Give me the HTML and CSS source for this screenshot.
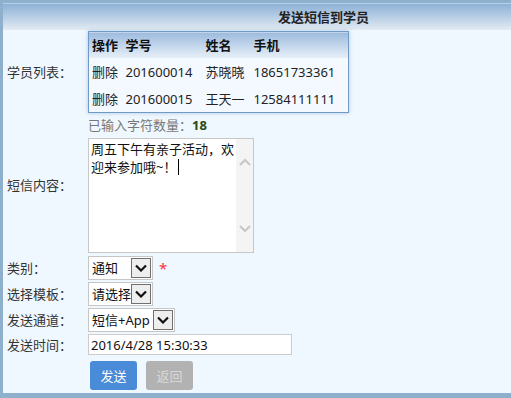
FILE: index.html
```html
<!DOCTYPE html>
<html lang="zh-CN">
<head>
    <meta charset="UTF-8">
    <meta name="viewport" content="width=device-width, initial-scale=1.0">
    <title>发送短信到学员</title>
    <link rel="stylesheet" href="styles.css">
</head>
<body>
    <div class="panel">
        <div class="panel-head">发送短信到学员</div>

        <div class="form">
            <!-- 学员列表 -->
            <div class="row row-list">
                <div class="label">学员列表：</div>
                <div class="field">
                    <table class="students">
                        <colgroup>
                            <col class="c1"><col class="c2"><col class="c3"><col class="c4">
                        </colgroup>
                        <thead>
                            <tr><th>操作</th><th>学号</th><th>姓名</th><th>手机</th></tr>
                        </thead>
                        <tbody>
                            <tr><td>删除</td><td>201600014</td><td>苏晓晓</td><td>18651733361</td></tr>
                            <tr><td>删除</td><td>201600015</td><td>王天一</td><td>12584111111</td></tr>
                        </tbody>
                    </table>
                </div>
            </div>

            <!-- 短信内容 -->
            <div class="row row-content">
                <div class="label">短信内容：</div>
                <div class="field field-stack">
                    <div class="count">已输入字符数量：<b>18</b></div>
                    <div class="textbox">
                        <div class="textbox-text">周五下午有亲子活动，欢迎来参加哦~！<span class="caret"></span></div>
                        <div class="scrollbar">
                            <svg width="12" height="8" viewBox="0 0 12 8"><path d="M1 7 L6 2 L11 7" fill="none" stroke="#c6c6c6" stroke-width="2"/></svg>
                            <svg width="12" height="8" viewBox="0 0 12 8"><path d="M1 1 L6 6 L11 1" fill="none" stroke="#c6c6c6" stroke-width="2"/></svg>
                        </div>
                    </div>
                </div>
            </div>

            <div class="row row-select">
                <div class="label">类别：</div>
                <div class="field">
                    <span class="select sel-type">
                        <span class="select-text">通知</span>
                        <span class="select-arrow"><svg width="12" height="8" viewBox="0 0 12 8"><path d="M1 1.5 L6 6.5 L11 1.5" fill="none" stroke="#111" stroke-width="2.2"/></svg></span>
                    </span>
                    <span class="required">*</span>
                </div>
            </div>

            <div class="row row-select">
                <div class="label">选择模板：</div>
                <div class="field">
                    <span class="select sel-tpl">
                        <span class="select-text">请选择</span>
                        <span class="select-arrow"><svg width="12" height="8" viewBox="0 0 12 8"><path d="M1 1.5 L6 6.5 L11 1.5" fill="none" stroke="#111" stroke-width="2.2"/></svg></span>
                    </span>
                </div>
            </div>

            <div class="row row-select">
                <div class="label">发送通道：</div>
                <div class="field">
                    <span class="select sel-channel">
                        <span class="select-text">短信+App</span>
                        <span class="select-arrow"><svg width="12" height="8" viewBox="0 0 12 8"><path d="M1 1.5 L6 6.5 L11 1.5" fill="none" stroke="#111" stroke-width="2.2"/></svg></span>
                    </span>
                </div>
            </div>

            <div class="row row-time">
                <div class="label">发送时间：</div>
                <div class="field">
                    <input class="time-input" type="text" value="2016/4/28 15:30:33">
                </div>
            </div>

            <div class="row row-buttons">
                <div class="label"></div>
                <div class="field buttons">
                    <button class="btn btn-send">发送</button>
                    <button class="btn btn-back">返回</button>
                </div>
            </div>
        </div>
    </div>
</body>
</html>
```

FILE: styles.css
```css
html, body {
    margin: 0;
    height: 398px;
    overflow: hidden;
}

body {
    background-color: #8fb0cd;
    font-family: "Noto Sans", "Noto Sans CJK SC", sans-serif;
    font-size: 13px;
    color: #333;
    text-spacing-trim: space-all;
}

.panel {
    margin: 3px 0 0 3px;
    height: 390px;
    background-color: #f0f8ff;
    border-top: 1px solid #b9d2ea;
    box-sizing: border-box;
}

.panel-head {
    height: 26px;
    line-height: 26px;
    padding-left: 275px;
    font-weight: bold;
    color: #222;
    background: linear-gradient(#8db1d6, #e3ebf3);
}

.form {
    padding-top: 1px;
}

.row {
    display: flex;
    align-items: center;
}

.label {
    width: 81px;
    padding-left: 4px;
    line-height: 18px;
    flex-shrink: 0;
}

.field {
    display: flex;
    align-items: center;
}

.field-stack {
    flex-direction: column;
    align-items: flex-start;
}

/* 学员列表 */
.students {
    border-collapse: collapse;
    table-layout: fixed;
    width: 260px;
    border: 1px solid #6d9ac6;
    box-shadow: 0 0 4px rgba(110, 150, 190, 0.5);
    background-color: #f3f9fe;
}

.students .c1 { width: 34px; }
.students .c2 { width: 80px; }
.students .c3 { width: 48px; }
.students .c4 { width: 98px; }

.students th,
.students td {
    padding: 0 0 0 3px;
    text-align: left;
    white-space: nowrap;
    line-height: 18px;
}

.students th {
    height: 26px;
    font-weight: bold;
    color: #111;
    background: linear-gradient(#9cbade, #e8f0f8);
}

.students td {
    height: 27px;
    color: #222;
}

/* 短信内容 */
.row-content {
    margin-top: 3px;
}

.count {
    height: 18px;
    line-height: 18px;
    margin-bottom: 4px;
    color: #777;
}

.count b {
    color: #2b4a12;
}

.textbox {
    display: flex;
    width: 166px;
    height: 115px;
    box-sizing: border-box;
    border: 1px solid #c8c8c8;
    background-color: #fff;
}

.textbox-text {
    flex: 1;
    padding: 1px 0 1px 2px;
    line-height: 18px;
    color: #111;
}

.caret {
    display: inline-block;
    width: 1px;
    height: 16px;
    margin-left: 2px;
    vertical-align: -3px;
    background-color: #000;
}

.scrollbar {
    width: 17px;
    background-color: #f4f4f4;
    display: flex;
    flex-direction: column;
    justify-content: space-between;
    align-items: center;
    padding: 19px 0 19px;
    box-sizing: border-box;
}

/* 下拉框 */
.row-select {
    margin-top: 2px;
}

.row-content + .row-select {
    margin-top: 3px;
}

.select {
    display: inline-flex;
    align-items: center;
    height: 24px;
    box-sizing: border-box;
    border: 1px solid #c6c6c6;
    background-color: #fff;
    padding: 0 1px 0 3px;
    color: #111;
}

.select-text {
    flex: 1;
    line-height: 18px;
    white-space: nowrap;
}

.select-arrow {
    width: 20px;
    height: 20px;
    box-sizing: border-box;
    border: 1px solid #707070;
    background-color: #eee;
    display: flex;
    align-items: center;
    justify-content: center;
}

.sel-type { width: 65px; }
.sel-tpl { width: 65px; }
.sel-channel { width: 87px; }

.required {
    color: #f33;
    margin-left: 6px;
    font-size: 15px;
    line-height: 18px;
}

.row-time {
    margin-top: 2px;
}

.time-input {
    width: 204px;
    height: 21px;
    box-sizing: border-box;
    border: 1px solid #ccc;
    padding: 0 2px;
    font-family: inherit;
    font-size: 13px;
    color: #111;
    background-color: #fff;
}

.row-buttons {
    margin-top: 6px;
}

.buttons {
    gap: 9px;
    padding-left: 2px;
}

.btn {
    width: 47px;
    height: 29px;
    border: none;
    border-radius: 3px;
    font-family: inherit;
    font-size: 13px;
    padding: 0;
}

.btn-send {
    background-color: #4a8bd8;
    color: #fff;
}

.btn-back {
    background-color: #b2b2b2;
    color: #d8d8d8;
}
```
